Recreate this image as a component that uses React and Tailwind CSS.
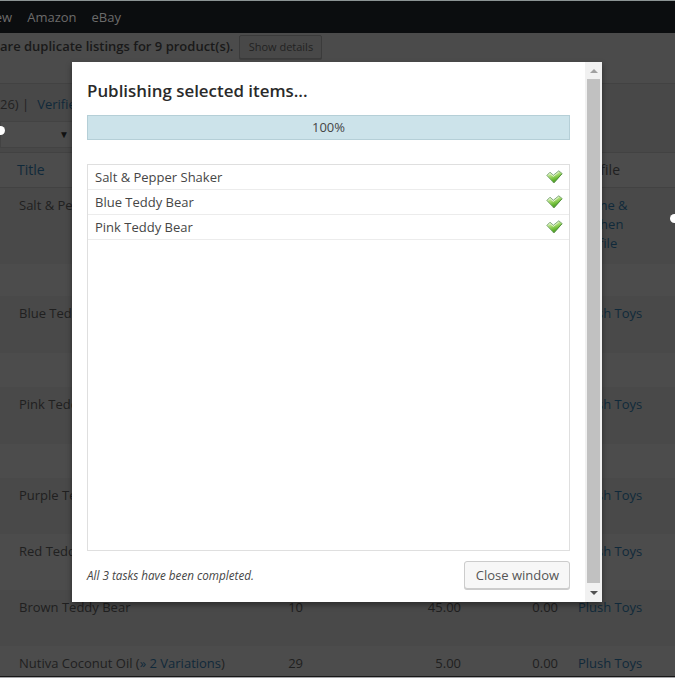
import React from "react";

const menuItems = ["New", "Amazon", "eBay"];

const tasks = ["Salt & Pepper Shaker", "Blue Teddy Bear", "Pink Teddy Bear"];

const listings = [
  {
    title: "Salt & Pepper Shaker",
    profile: "Home & Kitchen Profile",
    main: "h-[76px]",
    extra: "h-8",
  },
  { title: "Blue Teddy Bear", profile: "Plush Toys", main: "h-[57px]", extra: "h-[34px]" },
  { title: "Pink Teddy Bear", profile: "Plush Toys", main: "h-[57px]", extra: "h-[34px]" },
  { title: "Purple Teddy Bear", profile: "Plush Toys", main: "h-14" },
  { title: "Red Teddy Bear", profile: "Plush Toys", main: "h-14", light: true },
  {
    title: "Brown Teddy Bear",
    quantity: "10",
    price: "45.00",
    fee: "0.00",
    profile: "Plush Toys",
    main: "h-14",
  },
  {
    title: "Nutiva Coconut Oil",
    variations: "» 2 Variations",
    quantity: "29",
    price: "5.00",
    fee: "0.00",
    profile: "Plush Toys",
    main: "h-[30px]",
    light: true,
  },
];

const CheckIcon = () => (
  <svg width="17" height="14" viewBox="0 0 17 14" className="block">
    <defs>
      <linearGradient id="check" x1="0.2" y1="0" x2="0.6" y2="1">
        <stop offset="0" stopColor="#e2f2d6" />
        <stop offset="0.4" stopColor="#a9db70" />
        <stop offset="0.7" stopColor="#68b932" />
        <stop offset="1" stopColor="#3f8a1c" />
      </linearGradient>
    </defs>
    <path
      d="M0.8 5.4 L4 2.2 L7.4 5.2 L12.8 0.8 L16.2 3.6 L7.8 13 Z"
      fill="url(#check)"
      stroke="#7da57a"
      strokeWidth="0.9"
      strokeLinejoin="round"
    />
    <path d="M7.8 12.8 L15.8 3.9" fill="none" stroke="#4a8f2c" strokeWidth="0.9" />
    <path d="M2.4 5.2 L4 3.6 L7.4 6.4 L12.8 2.1" fill="none" stroke="#eef8e6" strokeWidth="0.8" />
  </svg>
);

const ListingRow = ({ item }) => (
  <div>
    <div
      className={`flex pt-2 text-[13px] leading-[19px] ${item.main} ${
        item.light ? "bg-[#4c4c4c]" : "bg-[#494949]"
      }`}
    >
      <div className="w-[243px] pl-[19px] whitespace-nowrap">
        {item.title}
        {item.variations && (
          <>
            {" "}
            (<span className="text-[#10293a]">{item.variations}</span>)
          </>
        )}
      </div>
      <div className="w-[60px] text-right">{item.quantity}</div>
      <div className="w-[158px] text-right">{item.price}</div>
      <div className="w-[97px] text-right">{item.fee}</div>
      <div className="ml-5 w-[70px] text-[#10293a]">{item.profile}</div>
    </div>
    {item.extra && <div className={`bg-[#4c4c4c] ${item.extra}`} />}
  </div>
);

const ListingsPage = () => (
  <div className="h-[678px] w-[675px] overflow-hidden bg-[#484848] text-[#202020]">
    <div className="flex h-[33px] gap-[15px] border-t border-[#8c9494] bg-[#0b0d0f] pt-[7px] text-[13px] leading-[19px] text-[#6b6b6b]">
      {menuItems.map((item) => (
        <span key={item} className="first:-ml-[15px]">
          {item}
        </span>
      ))}
    </div>

    <div className="flex h-[50px] items-start bg-[#4b4b4b] pt-[2px]">
      <p className="pt-[2px] text-[13px] leading-[19px] font-semibold whitespace-nowrap text-[#191919]">
        are duplicate listings for 9 product(s).
      </p>
      <button className="ml-[6px] h-6 w-[83px] rounded-[2px] border border-[#3b3b3b] bg-[#484848] text-[11px] text-[#222] shadow-[0_1px_0_#3e3e3e]">
        Show details
      </button>
    </div>

    <div className="h-[69px] border-t border-[#424242]">
      <div className="flex h-[37px] pt-[11px] text-[13px] leading-[19px] text-[#222]">
        <span>26) |</span>
        <span className="ml-2 text-[#10293a]">Verified</span>
      </div>
      <div className="flex h-[27px] w-[140px] items-center border border-[#434343] bg-[#4c4c4c] pl-[58px] text-[10px] text-[#111]">
        ▼
      </div>
    </div>

    <div className="flex h-9 items-center justify-between border-y border-[#424242] bg-[#4c4c4c] pl-[17px] text-sm">
      <span className="text-[#10293a]">Title</span>
      <span className="mr-[55px]">Profile</span>
    </div>
    {listings.map((item) => (
      <ListingRow key={item.title} item={item} />
    ))}
    <div className="h-[2px] border-t border-[#171717] bg-[#a5a5a8]" />
  </div>
);

const Scrollbar = () => (
  <div className="flex w-[17px] flex-col items-center bg-[#f1f1f1]">
    <div className="flex h-[17px] items-center">
      <svg width="8" height="4" viewBox="0 0 8 4">
        <path d="M0 4 L4 0 L8 4 Z" fill="#a0a0a0" />
      </svg>
    </div>
    <div className="w-[13px] flex-1 bg-[#c1c1c1]" />
    <div className="flex h-[19px] items-center">
      <svg width="8" height="4" viewBox="0 0 8 4">
        <path d="M0 0 L4 4 L8 0 Z" fill="#505050" />
      </svg>
    </div>
  </div>
);

const PublishDialog = () => (
  <div className="absolute top-[62px] left-[72px] flex h-[540px] w-[530px] bg-white shadow-[0_3px_6px_rgba(0,0,0,0.4)]">
    <div className="flex flex-1 flex-col px-[15px] text-[#464646]">
      <h2 className="mt-[17px] text-[16.9px] leading-6 font-semibold whitespace-nowrap text-[#2a2a2a]">
        Publishing selected items...
      </h2>
      <div className="mt-3 h-[25px] border border-[#b5cfd7] bg-[#cce3ea] text-center text-[13px] leading-[23px]">
        100%
      </div>
      <div className="mt-6 h-[387px] border border-[#dfdfdf]">
        {tasks.map((task) => (
          <div
            key={task}
            className="flex h-[25px] items-center justify-between border-b border-[#ececec] pr-[6px] pl-[7px] text-[13px]"
          >
            <span className="pt-[2px]">{task}</span>
            <CheckIcon />
          </div>
        ))}
      </div>
      <div className="mt-[10px] flex items-center justify-between">
        <p className="pt-[2px] text-[11.7px] italic">All 3 tasks have been completed.</p>
        <button className="h-7 w-[106px] rounded-[3px] border border-[#ccc] bg-[#f7f7f7] pt-[2px] pl-px text-[13px] text-[#555] shadow-[0_1px_0_#ccc]">
          Close window
        </button>
      </div>
    </div>
    <Scrollbar />
  </div>
);

const App = () => {
  return (
    <div className="relative h-[678px] w-[675px] overflow-hidden font-['Open_Sans',sans-serif]">
      <ListingsPage />
      <PublishDialog />
      <span className="absolute top-[126px] -left-[5px] h-[9px] w-[10px] rounded-full bg-white" />
      <span className="absolute top-[214px] -right-[5px] h-[9px] w-[10px] rounded-full bg-white" />
    </div>
  );
};

export default App;
